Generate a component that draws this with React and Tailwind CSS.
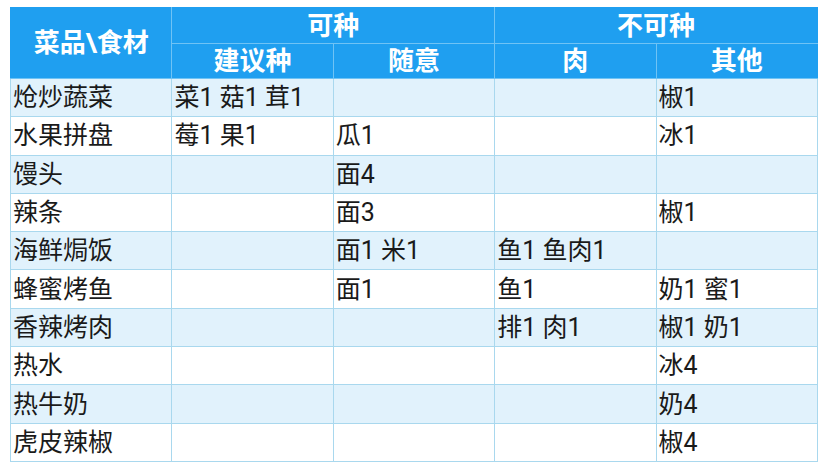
import React from 'react';

const ROWS = [
  ['炝炒蔬菜', '菜1 菇1 茸1', '', '', '椒1'],
  ['水果拼盘', '莓1 果1', '瓜1', '', '冰1'],
  ['馒头', '', '面4', '', ''],
  ['辣条', '', '面3', '', '椒1'],
  ['海鲜焗饭', '', '面1 米1', '鱼1 鱼肉1', ''],
  ['蜂蜜烤鱼', '', '面1', '鱼1', '奶1 蜜1'],
  ['香辣烤肉', '', '', '排1 肉1', '椒1 奶1'],
  ['热水', '', '', '', '冰4'],
  ['热牛奶', '', '', '', '奶4'],
  ['虎皮辣椒', '', '', '', '椒4'],
];

const font = { fontFamily: 'Roboto, "Noto Sans CJK SC", sans-serif' };

export default function App() {
  return (
    <div className="w-[828px] h-[468px] bg-white pl-[10px] pt-[7px]" style={font}>
      <table className="w-[808px] table-fixed border-collapse">
        <thead className="bg-[#1f9ff0] text-white font-bold text-[26px]">
          <tr className="h-[36px]">
            <th rowSpan={2} className="border border-[#6fc3f5] border-l-[#1f9ff0] border-t-[#1f9ff0] leading-none">
              菜品\食材
            </th>
            <th colSpan={2} className="border border-[#6fc3f5] border-t-[#1f9ff0] leading-none">可种</th>
            <th colSpan={2} className="border border-[#6fc3f5] border-t-[#1f9ff0] border-r-[#1f9ff0] leading-none">不可种</th>
          </tr>
          <tr className="h-[35px]">
            <th className="border border-[#6fc3f5] leading-none">建议种</th>
            <th className="border border-[#6fc3f5] leading-none">随意</th>
            <th className="border border-[#6fc3f5] leading-none">肉</th>
            <th className="border border-[#6fc3f5] border-r-[#1f9ff0] leading-none">其他</th>
          </tr>
        </thead>
        <tbody className="text-[25px] text-[#1a1a1a]">
          {ROWS.map((row, i) => (
            <tr key={i} className={i % 2 === 0 ? 'h-[38.3px] bg-[#e1f2fc]' : 'h-[38.3px] bg-white'}>
              {row.map((cell, j) => (
                <td key={j} className="border border-[#a9d8ee] pl-[2px] leading-none whitespace-nowrap">
                  {cell}
                </td>
              ))}
            </tr>
          ))}
        </tbody>
      </table>
    </div>
  );
}
